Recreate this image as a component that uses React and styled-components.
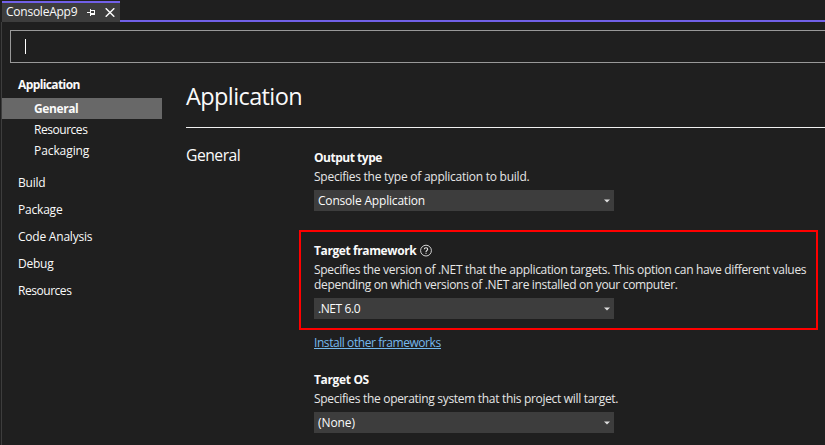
import React from 'react';
import styled, { createGlobalStyle } from 'styled-components';

const GlobalStyle = createGlobalStyle`
  * { box-sizing: border-box; }
  body {
    margin: 0;
    background: #1f1f1f;
    color: #fafafa;
    font: 12px/16px "Open Sans", "Noto Sans", sans-serif;
    overflow: hidden;
  }
`;

const Text = styled.span`
  letter-spacing: ${(p) => p.$track || 0}px;
  white-space: nowrap;
`;

const Window = styled.div`
  display: flex;
  flex-direction: column;
  width: 825px;
  height: 445px;
  overflow: hidden;
  background: #1f1f1f;
`;

const TabStrip = styled.header`
  display: flex;
  flex: none;
  height: 22px;
  padding: 1px 0 0 2px;
`;

const Tab = styled.div`
  display: flex;
  width: 118px;
  height: 21px;
  padding-left: 4px;
  background: #3d3d3d;
  border-top: 2px solid #7160e8;
`;

const TabTitle = styled(Text)`
  width: 80px;
  line-height: 18px;
`;

const TabIcons = styled.div`
  display: flex;
  gap: 10px;
  padding-top: 5px;
`;

const StripLine = styled.div`
  flex: 1;
  align-self: flex-end;
  height: 2px;
  background: #7160e8;
`;

const Document = styled.div`
  display: flex;
  flex: 1;
  flex-direction: column;
  margin-left: 1px;
  padding-top: 8px;
  border-left: 1px solid #3d3d3d;
`;

const SearchBox = styled.div`
  flex: none;
  height: 33px;
  margin: 0 -2px 0 8px;
  padding: 8px 0 0 14px;
  border: 1px solid #999;
`;

const Caret = styled.div`
  width: 1px;
  height: 15px;
  background: #fff;
`;

const Columns = styled.div`
  display: flex;
  flex: 1;
`;

const Nav = styled.nav`
  display: flex;
  flex: none;
  flex-direction: column;
  width: 160px;
  padding-top: 14px;
`;

const NavItem = styled.div`
  height: 27px;
  padding-left: 16px;
  font-weight: ${(p) => (p.$bold ? 700 : 400)};
`;

const NavHeading = styled(NavItem)`
  height: 21px;
`;

const SubItem = styled.div`
  height: 21px;
  padding-left: 32px;
  line-height: 21px;
  font-weight: ${(p) => (p.$selected ? 700 : 400)};
  background: ${(p) => (p.$selected ? '#686868' : 'transparent')};
`;

const SubList = styled.div`
  padding-bottom: 14px;
`;

const Content = styled.main`
  flex: 1;
  padding: 17px 0 0 24px;
`;

const Title = styled.h1`
  height: 48px;
  margin: 0;
  border-bottom: 1px solid #f0f0f0;
  font-size: 23.5px;
  font-weight: 400;
  line-height: 32px;
`;

const Section = styled.section`
  display: flex;
`;

const SectionTitle = styled.h2`
  width: 128px;
  margin: 0;
  padding-top: 17px;
  font-size: 15.7px;
  font-weight: 400;
  line-height: 20px;
`;

const Settings = styled.div`
  padding-top: 22px;
`;

const Setting = styled.div`
  display: flex;
  flex-direction: column;
`;

const Highlight = styled.div`
  width: 519px;
  height: 100px;
  margin: 19px 0 0 -15px;
  padding: 11px 0 0 13px;
  border: 2px solid #f00;
`;

const Label = styled.div`
  display: flex;
  gap: 4px;
  height: 19px;
  font-weight: 700;
`;

const Description = styled.div`
  display: flex;
  flex-direction: column;
  margin-bottom: 6px;
  color: #e6e6e6;
  line-height: 15px;
`;

const Select = styled.div`
  display: flex;
  align-items: center;
  justify-content: space-between;
  width: 300px;
  height: 21px;
  padding: 0 4px;
  background: #3d3d3d;
  line-height: 21px;
`;

const Link = styled.a`
  display: block;
  width: 127px;
  height: 14px;
  margin: 5px 0 23px;
  border-bottom: 1px solid #76b9ed;
  color: #76b9ed;
  line-height: 15px;
`;

const PinIcon = () => (
  <svg width="9" height="9" viewBox="0 0 9 9" shapeRendering="crispEdges" fill="#fafafa">
    <path d="M1 4h3v1H1zM4 1h1v7H4zM5 2h4v1H5zM8 3h1v2H8zM5 5h4v2H5z" />
  </svg>
);

const CloseIcon = () => (
  <svg width="10" height="9" viewBox="0 0 10 9" fill="none" stroke="#fafafa" strokeWidth="1.5">
    <path d="M.7.3l8.6 8.4M9.3.3L.7 8.7" />
  </svg>
);

const HelpIcon = () => (
  <svg width="12" height="14" viewBox="0 0 12 14" fill="none" stroke="#e6e6e6">
    <circle cx="6" cy="7.6" r="5.4" strokeWidth="0.9" />
    <path d="M4.3 6.3c0-2.1 3.4-2.1 3.4 0C7.7 7.5 6 7.500 6 8.900M6 9.800v1" strokeWidth="1.1" />
  </svg>
);

const Chevron = () => (
  <svg width="6" height="4" viewBox="0 0 6 4" fill="#dedede">
    <path d="M0 .5h6L3 3.500z" />
  </svg>
);

const subItems = [
  { name: 'General', track: -0.4, selected: true },
  { name: 'Resources', track: -0.46 },
  { name: 'Packaging', track: -0.08 },
];

const navItems = [
  { name: 'Build', track: -0.2 },
  { name: 'Package', track: -0.2 },
  { name: 'Code Analysis', track: -0.22 },
  { name: 'Debug', track: -0.25 },
  { name: 'Resources', track: -0.46 },
];

function Option({ label, labelTrack, lines, lineTrack, value, valueTrack, help }) {
  return (
    <Setting>
      <Label>
        <Text $track={labelTrack}>{label}</Text>
        {help && <HelpIcon />}
      </Label>
      <Description>
        {lines.map((line) => (
          <Text key={line} $track={lineTrack}>{line}</Text>
        ))}
      </Description>
      <Select>
        <Text $track={valueTrack}>{value}</Text>
        <Chevron />
      </Select>
    </Setting>
  );
}

export default function App() {
  return (
    <Window>
      <GlobalStyle />
      <TabStrip>
        <Tab>
          <TabTitle $track={-0.24}>ConsoleApp9</TabTitle>
          <TabIcons>
            <PinIcon />
            <CloseIcon />
          </TabIcons>
        </Tab>
        <StripLine />
      </TabStrip>
      <Document>
        <SearchBox>
          <Caret />
        </SearchBox>
        <Columns>
          <Nav>
            <NavHeading $bold>
              <Text $track={-0.6}>Application</Text>
            </NavHeading>
            <SubList>
              {subItems.map((item) => (
                <SubItem key={item.name} $selected={item.selected}>
                  <Text $track={item.track}>{item.name}</Text>
                </SubItem>
              ))}
            </SubList>
            {navItems.map((item) => (
              <NavItem key={item.name}>
                <Text $track={item.track}>{item.name}</Text>
              </NavItem>
            ))}
          </Nav>
          <Content>
            <Title>
              <Text $track={-0.6}>Application</Text>
            </Title>
            <Section>
              <SectionTitle>
                <Text $track={-0.5}>General</Text>
              </SectionTitle>
              <Settings>
                <Option
                  label="Output type"
                  labelTrack={-0.48}
                  lines={['Specifies the type of application to build.']}
                  lineTrack={-0.25}
                  value="Console Application"
                  valueTrack={-0.19}
                />
                <Highlight>
                  <Option
                    label="Target framework"
                    labelTrack={-0.4}
                    lines={[
                      'Specifies the version of .NET that the application targets. This option can have different values',
                      'depending on which versions of .NET are installed on your computer.',
                    ]}
                    lineTrack={-0.32}
                    value=".NET 6.0"
                    valueTrack={-0.42}
                    help
                  />
                </Highlight>
                <Link>
                  <Text $track={-0.43}>Install other frameworks</Text>
                </Link>
                <Option
                  label="Target OS"
                  labelTrack={-0.35}
                  lines={['Specifies the operating system that this project will target.']}
                  lineTrack={-0.31}
                  value="(None)"
                  valueTrack={-0.08}
                />
              </Settings>
            </Section>
          </Content>
        </Columns>
      </Document>
    </Window>
  );
}
